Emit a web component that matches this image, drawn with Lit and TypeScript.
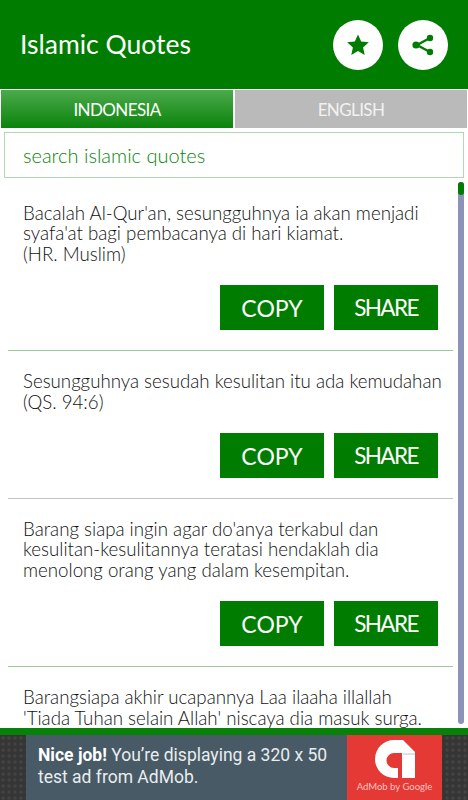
import { LitElement, css, html } from 'lit';
import { customElement, state } from 'lit/decorators.js';

const QUOTES = [
  ['Bacalah Al-Qur\'an, sesungguhnya ia akan menjadi', 'syafa\'at bagi pembacanya di hari kiamat.', '(HR. Muslim)'],
  ['Sesungguhnya sesudah kesulitan itu ada kemudahan', '(QS. 94:6)'],
  ['Barang siapa ingin agar do\'anya terkabul dan', 'kesulitan-kesulitannya teratasi hendaklah dia', 'menolong orang yang dalam kesempitan.'],
  ['Barangsiapa akhir ucapannya Laa ilaaha illallah', '\'Tiada Tuhan selain Allah\' niscaya dia masuk surga.'],
];

@customElement('app-root')
export class AppRoot extends LitElement {
  @state() tab = 'INDONESIA';

  static styles = css`
    :host {
      display: flex;
      flex-direction: column;
      width: 468px;
      height: 800px;
      overflow: hidden;
      background: #fff;
      font-family: 'Lato', 'Liberation Sans', sans-serif;
    }
    .header {
      display: flex;
      align-items: center;
      height: 89px;
      padding: 0 20px;
      gap: 15px;
      background: #007d00;
      flex: none;
      box-sizing: border-box;
    }
    .title {
      flex: 1;
      color: #fff;
      font-size: 26.5px;
      font-weight: 400;
      padding-bottom: 2px;
    }
    .round {
      display: flex;
      align-items: center;
      justify-content: center;
      width: 50px;
      height: 50px;
      border-radius: 50%;
      background: #fff;
    }
    .round svg {
      width: 24px;
      height: 24px;
      fill: #007d00;
    }
    .tabs {
      display: flex;
      flex: none;
      height: 38px;
      margin-top: 1px;
      padding: 0 1px;
      gap: 2px;
    }
    .tab {
      flex: 1;
      display: flex;
      align-items: center;
      justify-content: center;
      background: #bababa;
      color: #f2f2f2;
      font-size: 17px;
      letter-spacing: -0.6px;
    }
    .tab.active {
      background: linear-gradient(#4caa4c, #0b830b);
      color: #fff;
    }
    .search {
      flex: none;
      display: flex;
      align-items: center;
      height: 46px;
      margin: 4px 4px 0;
      padding-left: 18px;
      border: 1px solid #b5d6b5;
      box-sizing: border-box;
      color: #0a860a;
      font-size: 20px;
      font-weight: 300;
    }
    .list {
      position: relative;
      flex: 1;
      min-height: 0;
      overflow: hidden;
      padding-top: 4.6px;
    }
    .item {
      margin-right: 15px;
      margin-left: 8px;
      padding: 20px 15px;
      border-bottom: 1px solid #9cc79c;
    }
    .item:nth-child(2) {
      border-bottom-color: #c3c3c3;
    }
    .text {
      color: #111;
      font-size: 18.7px;
      font-weight: 300;
      line-height: 20.8px;
      white-space: nowrap;
    }
    .actions {
      display: flex;
      justify-content: flex-end;
      gap: 10px;
      margin-top: 20px;
    }
    .btn {
      display: flex;
      align-items: center;
      justify-content: center;
      width: 104px;
      height: 45px;
      padding-top: 1px;
      box-sizing: border-box;
      background: #007d00;
      color: #fff;
      font-size: 23px;
    }
    .btn.share {
      font-size: 22.5px;
      letter-spacing: -1.6px;
    }
    .thumb {
      position: absolute;
      top: 4px;
      right: 4px;
      width: 6px;
      height: 542px;
      border-radius: 3px;
      background: #8b93b8;
    }
    .thumb::before {
      content: '';
      display: block;
      height: 13px;
      border-radius: 3px;
      background: #007d00;
    }
    .ad {
      flex: none;
      height: 72px;
      border-top: 7px solid #078107;
      box-sizing: border-box;
      display: flex;
      justify-content: center;
      background-color: #353535;
      background-image: radial-gradient(#424242 1.4px, transparent 2px);
      background-size: 6px 6px;
    }
    .ad-body {
      display: flex;
      width: 416px;
      background: #485a65;
    }
    .ad-text {
      flex: 1;
      padding: 9px 0 0 12px;
      color: #e8edef;
      font-family: 'Roboto', sans-serif;
      font-size: 17.5px;
      line-height: 22px;
    }
    .ad-text b {
      color: #fff;
      font-weight: 700;
    }
    .ad-logo {
      display: flex;
      flex-direction: column;
      align-items: center;
      width: 95px;
      background: #e53935;
    }
    .ad-logo svg {
      width: 40px;
      height: 38px;
      margin-top: 5px;
    }
    .ad-logo span {
      margin-top: 3px;
      color: #f7c4c2;
      font-size: 9.5px;
      white-space: nowrap;
    }
  `;

  render() {
    return html`
      <div class="header">
        <div class="title">Islamic Quotes</div>
        <div class="round">
          <svg viewBox="0 0 24 24"><path d="M12 1.5l3.2 7 7.6.8-5.7 5.1 1.6 7.5L12 18.1l-6.7 3.8 1.6-7.5L1.2 9.3l7.6-.8z"/></svg>
        </div>
        <div class="round">
          <svg viewBox="0 0 24 24" stroke="#007d00" stroke-width="2.4">
            <path d="M19 5L6 12l13 7" fill="none"/>
            <circle cx="19" cy="5" r="3.2" stroke="none"/>
            <circle cx="5" cy="12" r="3.6" stroke="none"/>
            <circle cx="19" cy="19" r="3.2" stroke="none"/>
          </svg>
        </div>
      </div>
      <div class="tabs">
        <div class="tab ${this.tab === 'INDONESIA' ? 'active' : ''}">INDONESIA</div>
        <div class="tab ${this.tab === 'ENGLISH' ? 'active' : ''}">ENGLISH</div>
      </div>
      <div class="search">search islamic quotes</div>
      <div class="list">
        ${QUOTES.map(
          (lines) => html`
            <div class="item">
              <div class="text">${lines.map((l) => html`<div>${l}</div>`)}</div>
              <div class="actions">
                <div class="btn">COPY</div>
                <div class="btn share">SHARE</div>
              </div>
            </div>
          `
        )}
        <div class="thumb"></div>
      </div>
      <div class="ad">
        <div class="ad-body">
          <div class="ad-text"><b>Nice job!</b> You’re displaying a 320 x 50 test ad from AdMob.</div>
          <div class="ad-logo">
            <svg viewBox="0 0 40 38">
              <path d="M19 0H28L40 12V38H27V13H19A7 7 0 0 0 19 28H23V38H19A19 19 0 0 1 19 0Z" fill="#fff"/>
              <path d="M28 13H40V15H28Z" fill="#e0e0e0"/>
            </svg>
            <span>AdMob by Google</span>
          </div>
        </div>
      </div>
    `;
  }
}
